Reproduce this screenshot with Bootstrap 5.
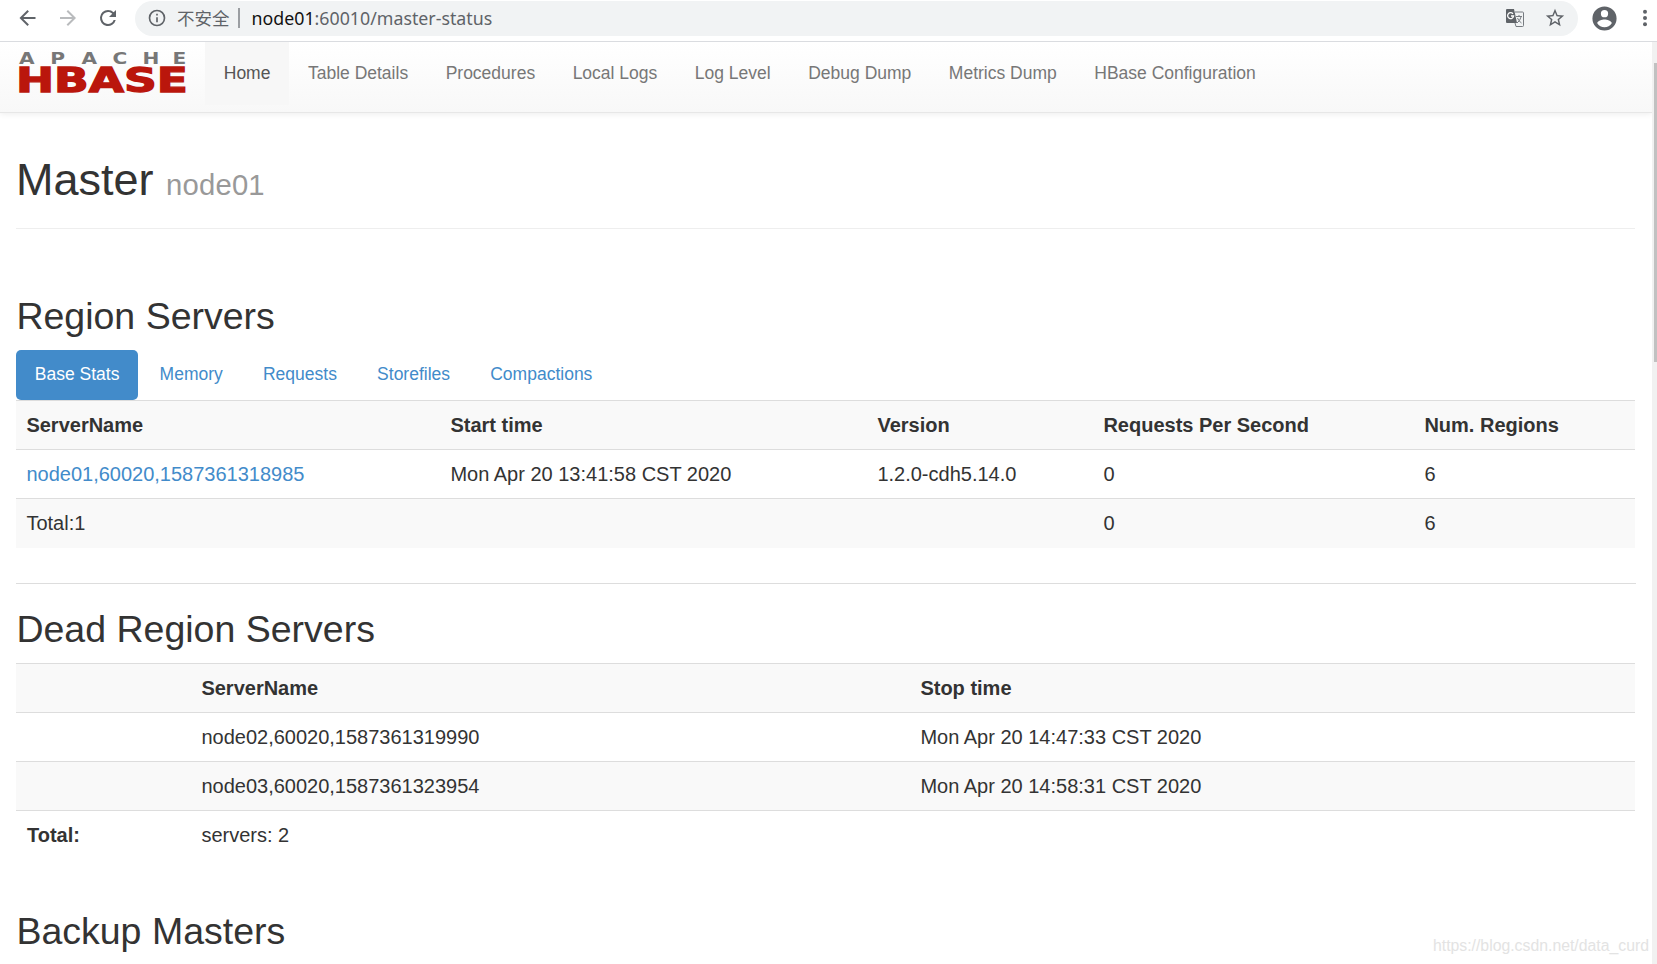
<!DOCTYPE html>
<html lang="en">
<head>
<meta charset="utf-8">
<title>Master: node01</title>
<link href="https://cdn.jsdelivr.net/npm/bootstrap@5.3.0/dist/css/bootstrap.min.css" rel="stylesheet">
<style>
html,body{height:100%}
body{font-family:"Liberation Sans",Arial,sans-serif;font-size:20px;line-height:28px;color:#333;background:#fff;overflow:hidden}
.browser-bar{height:42px;border-bottom:1px solid #dadce0;background:#fff;padding:0 0 5px 15px}
.browser-bar svg{display:block;flex:none}
.omnibox{height:35px;margin-left:15px;width:1443px;border-radius:18px;background:#f1f3f4;padding:0 12px 0 12px;font-family:"Noto Sans","Noto Sans CJK SC",sans-serif;font-size:17.5px;color:#5f6368;line-height:34px}
.omnibox .insecure{font-family:"Noto Sans CJK SC",sans-serif;font-size:17.5px;margin-left:10px}
.omnibox .divider{width:2px;height:20px;background:#9b9ea2;margin:0 12px 0 8px}
.omnibox .address{font-size:17.8px}
.omnibox .host{color:#111}
.viewport{height:922px}
.page-area{width:1652px;overflow:hidden}
.hbase-nav{height:71px;background:linear-gradient(#fff,#f8f8f8);border-bottom:1px solid #e7e7e7;box-shadow:0 1px 6px rgba(0,0,0,.075);padding:0}
.hbase-nav .logo{margin:8px 17px 0 16px;display:block}
.hbase-nav .navbar-nav .nav-link{font-size:17.5px;line-height:25px;padding:18.500px 18.75px 19px;color:#777}
.hbase-nav .navbar-nav .nav-link.active{color:#555;background:#f7f7f7}
.main{padding:0 17px 0 16px}
.main h1{font-size:45px;line-height:50px;padding:42px 0 18px;margin:0;border-bottom:1px solid #eee;font-weight:400}
.main h1 span{font-size:29.25px;color:#999;letter-spacing:.2px}
.main h2{font-size:37.5px;line-height:42px;font-weight:400;margin:0;text-indent:.4px}
.stat-tabs .nav-link{font-size:17.5px;line-height:25px;padding:11.5px 18.75px 13.5px;border-radius:5px;color:#428bca}
.stat-tabs .nav-link.active{background:#428bca;color:#fff}
.stat-tabs{gap:2.7px}
.stat-table{table-layout:fixed;width:1619px;margin:0;color:#333;--bs-table-striped-bg:#f9f9f9;--bs-table-striped-color:#333;--bs-table-color:#333}
.stat-table>tbody>tr>*{padding:10px 10.4px;border-top:1px solid #ddd;border-bottom:0;height:49px;line-height:28px}
.stat-table a{color:#428bca;text-decoration:none}
.stat-table .total-label{text-indent:.6px}
.rule{height:1px;background:#ddd}
.scroll-track{width:5px;background:#f1f1f1;padding:21px 0 0 2px}
.scroll-thumb{height:299px;background:#c1c1c1}
.watermark{position:absolute;right:8px;bottom:6px;font-size:15.8px;line-height:24px;color:#e3e3e3}
</style>
</head>
<body>
<header class="browser-bar d-flex align-items-center">
  <svg width="25" height="24" viewBox="0 0 24 24" fill="#5f6368"><path d="M20 11H7.83l5.59-5.59L12 4l-8 8 8 8 1.41-1.41L7.83 13H20z"/></svg>
  <svg class="ms-3" width="24" height="24" viewBox="0 0 24 24" fill="#b9bbbd"><path d="M4 11h12.17l-5.59-5.59L12 4l8 8-8 8-1.41-1.41L16.17 13H4z"/></svg>
  <svg class="ms-3" width="24" height="24" viewBox="0 0 24 24" fill="#5f6368"><path d="M17.65 6.35A7.96 7.96 0 0 0 12 4a8 8 0 1 0 7.73 10h-2.08A6 6 0 1 1 12 6c1.66 0 3.14.69 4.22 1.78L13 11h7V4z"/></svg>
  <div class="omnibox d-flex align-items-center">
    <svg width="20" height="20" viewBox="0 0 24 24" fill="#5f6368"><path d="M11 17h2v-6h-2zm1-15a10 10 0 1 0 0 20 10 10 0 0 0 0-20m0 18a8 8 0 1 1 0-16 8 8 0 0 1 0 16M11 9h2V7h-2z"/></svg>
    <span class="insecure">不安全</span><span class="divider"></span>
    <span class="address"><span class="host">node01</span>:60010/master-status</span>
    <svg class="ms-auto" width="18" height="18" viewBox="0 0 18 18"><path fill="#5f6368" d="M1 0h7l3 14H1a1 1 0 0 1-1-1V1a1 1 0 0 1 1-1z"/><path fill="none" stroke="#fff" stroke-width="1.3" d="M7 4.8A3 3 0 1 0 7.6 7H5"/><path fill="none" stroke="#777b80" d="M9 3h7.5q1 0 1 1v12.500q0 1-1 1H10l-1-3.500M10 7.500h6M13 6v1.500M15 8q-1 4-4 6M11.500 9q1 3 4 5"/></svg>
    <svg style="margin-left:20px" width="22" height="22" viewBox="0 0 24 24" fill="#5f6368"><path d="m22 9.240-7.190-.62L12 2 9.190 8.630 2 9.240l5.460 4.730L5.820 21 12 17.270 18.180 21l-1.630-7.030zM12 15.400l-3.760 2.270 1-4.280-3.320-2.880 4.380-.38L12 6.100l1.710 4.040 4.380.38-3.320 2.880 1 4.280z"/></svg>
  </div>
  <svg style="margin-left:12px" width="29" height="29" viewBox="0 0 24 24" fill="#5f6368"><path d="M12 2a10 10 0 1 0 0 20 10 10 0 0 0 0-20m0 3a3 3 0 1 1 0 6 3 3 0 0 1 0-6m0 14.200a7.200 7.200 0 0 1-6-3.220c.03-1.990 4-3.080 6-3.080s5.970 1.090 6 3.080a7.200 7.200 0 0 1-6 3.220"/></svg>
  <svg style="margin-left:22px" width="8" height="24" viewBox="0 0 8 24" fill="#5f6368"><circle cx="4" cy="5.800" r="2"/><circle cx="4" cy="12" r="2"/><circle cx="4" cy="18.200" r="2"/></svg>
</header>
<div class="viewport d-flex">
  <div class="page-area">
    <nav class="hbase-nav navbar navbar-expand align-items-start">
      <a class="logo" href="#">
        <svg class="d-block" width="172" height="52" viewBox="-3 0 172 52" font-family="DejaVu Sans" font-weight="bold">
          <g transform="scale(1.3 1)"><text x="0 24 48 72 95 118" y="13.500" font-size="15.500" fill="#777">APACHE</text></g>
          <text x="-3" y="42" font-size="34.500" textLength="172" lengthAdjust="spacingAndGlyphs" fill="#ba160c" stroke="#ba160c" stroke-width="1.300">HBASE</text>
        </svg>
      </a>
      <div class="navbar-nav">
        <a class="nav-link active" href="#">Home</a>
        <a class="nav-link" href="#">Table Details</a>
        <a class="nav-link" href="#">Procedures</a>
        <a class="nav-link" href="#">Local Logs</a>
        <a class="nav-link" href="#">Log Level</a>
        <a class="nav-link" href="#">Debug Dump</a>
        <a class="nav-link" href="#">Metrics Dump</a>
        <a class="nav-link" href="#">HBase Configuration</a>
      </div>
    </nav>
    <main class="main">
      <h1>Master <span>node01</span></h1>
      <section style="padding-top:66px">
        <h2>Region Servers</h2>
        <nav class="stat-tabs nav nav-pills" style="margin-top:13px">
          <a class="nav-link active" href="#">Base Stats</a>
          <a class="nav-link" href="#">Memory</a>
          <a class="nav-link" href="#">Requests</a>
          <a class="nav-link" href="#">Storefiles</a>
          <a class="nav-link" href="#">Compactions</a>
        </nav>
        <table class="stat-table table table-striped">
          <colgroup><col style="width:424px"><col style="width:427px"><col style="width:226px"><col style="width:321px"><col></colgroup>
          <tbody>
            <tr><th>ServerName</th><th>Start time</th><th>Version</th><th>Requests Per Second</th><th>Num. Regions</th></tr>
            <tr><td><a href="#">node01,60020,1587361318985</a></td><td>Mon Apr 20 13:41:58 CST 2020</td><td>1.2.0-cdh5.14.0</td><td>0</td><td>6</td></tr>
            <tr><td>Total:1</td><td></td><td></td><td>0</td><td>6</td></tr>
          </tbody>
        </table>
      </section>
      <div class="rule" style="margin-top:35px;margin-right:-1px"></div>
      <section style="padding-top:24px">
        <h2>Dead Region Servers</h2>
        <table class="stat-table table table-striped" style="margin-top:13px">
          <colgroup><col style="width:175px"><col style="width:719px"><col></colgroup>
          <tbody>
            <tr><th></th><th>ServerName</th><th>Stop time</th></tr>
            <tr><td></td><td>node02,60020,1587361319990</td><td>Mon Apr 20 14:47:33 CST 2020</td></tr>
            <tr><td></td><td>node03,60020,1587361323954</td><td>Mon Apr 20 14:58:31 CST 2020</td></tr>
            <tr><th class="total-label">Total:</th><td>servers: 2</td><td></td></tr>
          </tbody>
        </table>
      </section>
      <section style="padding-top:51px">
        <h2>Backup Masters</h2>
      </section>
    </main>
  </div>
  <div class="scroll-track"><div class="scroll-thumb"></div></div>
</div>
<div class="watermark">https://blog.csdn.net/data_curd</div>
<script src="https://cdn.jsdelivr.net/npm/bootstrap@5.3.0/dist/js/bootstrap.bundle.min.js"></script>
</body>
</html>
